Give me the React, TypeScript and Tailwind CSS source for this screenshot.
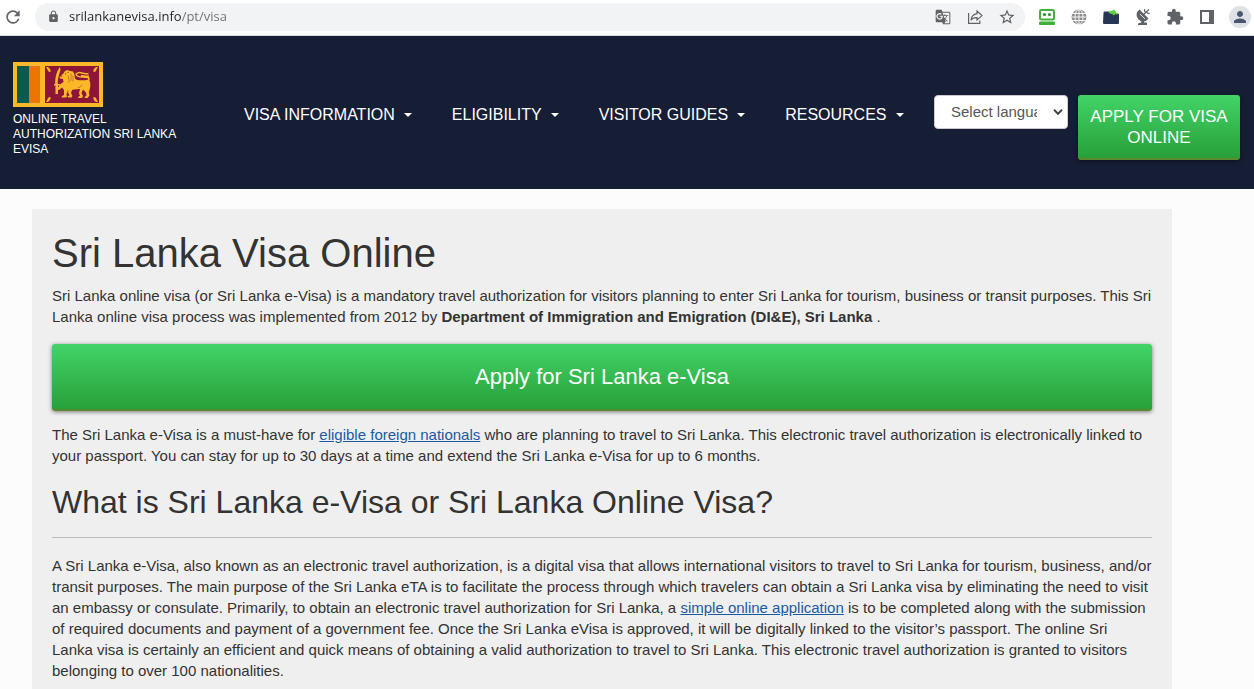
import type { ReactNode } from "react";
import { MdExtension, MdGTranslate, MdLock, MdPerson, MdRefresh, MdStarOutline } from "react-icons/md";

function ShareIcon() {
  return (
    <svg viewBox="0 0 16 16" className="size-4" fill="none" stroke="#5f6368" strokeWidth="1.2" strokeLinejoin="miter">
      <path d="M1.600 4v10.400h11.200v-3" />
      <path d="M10 2 15 6.600l-5 4.400V8.600C7.400 8.500 5.400 9 4 11.200c.4-3.600 2.600-6 6-6.500z" />
    </svg>
  );
}

function RobotIcon() {
  return (
    <svg viewBox="0 0 18 18" className="size-[18px]">
      <rect x="2" y="2" width="14" height="9.500" rx="1.500" fill="#fff" stroke="#45b03c" strokeWidth="2" />
      <circle cx="6.500" cy="6.500" r="1.600" fill="#2f8f2c" />
      <circle cx="11.500" cy="6.500" r="1.600" fill="#2f8f2c" />
      <rect x="1" y="13.500" width="16" height="3.500" rx="1" fill="#3fae3a" />
    </svg>
  );
}

function GlobeIcon() {
  return (
    <svg viewBox="0 0 16 16" className="size-4">
      <circle cx="8" cy="8" r="7.500" fill="#8f8f8f" />
      <g fill="none" stroke="#fff" strokeWidth=".9">
        <path d="M8 .5v15M.5 8h15M1 4.500h14M1 11.500h14" />
        <ellipse cx="8" cy="8" rx="4" ry="7.500" />
      </g>
    </svg>
  );
}

function WalletIcon() {
  return (
    <svg viewBox="0 0 18 18" className="size-[18px]">
      <path d="M1.500 5C1.500 4 2 3.500 3 3.500h4l1.500 2h7c1 0 1.500.5 1.500 1.500v7.500c0 1-.5 1.500-1.500 1.500h-13C1.500 16 1 15.500 1 14.500z" fill="#263653" />
      <path d="M6.500 5 8 2.500l1.500.5L12 1.500 14 4l1.500 3-2-1-2 1.500L10 5.500z" fill="#5fd13c" />
    </svg>
  );
}

function DishIcon() {
  return (
    <svg viewBox="0 0 16 18" className="h-[18px] w-4" fill="#5f6368">
      <path d="M4.500 1.500a6.500 6.500 0 1 0 9 9z" />
      <path d="M7 11h2v3.500h3V17H3v-1.500l3-1z" />
      <path d="M10 1c-1 2-.5 3 1 3s1.500 2.500 3.500 1M8 7l6-5.500" fill="none" stroke="#5f6368" strokeWidth="1.200" />
      <path d="m5 6 5 5" fill="none" stroke="#fff" strokeWidth=".8" />
    </svg>
  );
}

function PanelIcon() {
  return (
    <svg viewBox="0 0 14 14" className="size-[14px]">
      <path d="M0 0h14v14H0zM2 2v10h7V2z" fill="#5f6368" fillRule="evenodd" />
    </svg>
  );
}

function BrowserButton({ label, children }: { label: string; children: ReactNode }) {
  return (
    <button type="button" aria-label={label} className="flex size-5 items-center justify-center text-[#5f6368]">
      {children}
    </button>
  );
}

function BrowserBar() {
  return (
    <div className="flex h-9 items-center border-b border-[#dcdee1] bg-white px-[3px] pb-[2px]">
      <BrowserButton label="Reload">
        <MdRefresh className="size-5 shrink-0" />
      </BrowserButton>
      <div className="ml-3 flex h-7 flex-1 items-center rounded-full bg-[#f1f3f4] pl-3 pr-2">
        <MdLock className="size-[13px] text-[#5f6368]" />
        <input
          type="text"
          aria-label="Address"
          defaultValue="srilankanevisa.info/pt/visa"
          className="ml-[9px] min-w-0 flex-1 bg-linear-to-r from-[#202124] from-[113px] to-[#6b6f74] to-[113px] bg-clip-text pt-px font-['Open_Sans','Noto_Sans',sans-serif] text-[13px] text-transparent outline-none"
        />
        <div className="flex gap-3">
          <BrowserButton label="Translate this page">
            <MdGTranslate className="size-4" />
          </BrowserButton>
          <BrowserButton label="Share this page">
            <ShareIcon />
          </BrowserButton>
          <BrowserButton label="Bookmark this page">
            <MdStarOutline className="size-[18px]" />
          </BrowserButton>
        </div>
      </div>
      <div className="ml-3 flex items-center gap-3">
        <BrowserButton label="Form filler"><RobotIcon /></BrowserButton>
        <BrowserButton label="Globe"><GlobeIcon /></BrowserButton>
        <BrowserButton label="Wallet"><WalletIcon /></BrowserButton>
        <BrowserButton label="Satellite"><DishIcon /></BrowserButton>
        <BrowserButton label="Extensions"><MdExtension className="size-[18px]" /></BrowserButton>
        <BrowserButton label="Side panel"><PanelIcon /></BrowserButton>
        <button type="button" aria-label="Profile" className="flex size-[22px] items-center justify-center rounded-full bg-[#dee1e6] text-[#4a5670]">
          <MdPerson className="size-[18px]" />
        </button>
      </div>
    </div>
  );
}

function SriLankaFlag() {
  return (
    <svg viewBox="0 0 90 45" className="h-[45px] w-[90px]" role="img" aria-label="Flag of Sri Lanka">
      <path d="M0 0h90v45H0z" fill="#fdb82a" />
      <path d="M4 4h12v37H4z" fill="#0b5a4e" />
      <path d="M16 4h11v37H16z" fill="#ec7400" />
      <path d="M32 4h54v37H32z" fill="#8d1537" />
      <g fill="#fdb82a">
        <path d="M33 5c3 0 5 2 4.500 5-2 0-3-1-3-2.500zM85 5c-3 0-5 2-4.500 5 2 0 3-1 3-2.500zM33 40c3 0 5-2 4.500-5-2 0-3 1-3 2.500zM85 40c-3 0-5-2-4.500-5 2 0 3 1 3 2.500z" />
        <path d="M47 5c-3 4-5 9-4.800 17h2.600c-.3-6 1.700-10 2.700-14z" />
        <path d="M41 22h6v1.500h-2v8.500h-2.500v-8.500H41z" />
        <path d="m48 13 2-1 1.500-2.500L54 8l3 1 3 .5 1.500 3 .5 4 2 1.500c4 .5 8 .5 11.500-.5 1.500 1 2 3.500 1.800 6 0 3-1.300 5-1.500 7l.7 3-2 2.500h-3l.5-1.500 1.500-1-.5-3-3-3-1.500 3.500 1.500 3-1 2h-4l.5-1.500 1.500-.5-1-3 1-4-6 .5-2 .5-1 3 1.500 3-1 1.500h-3.500l-.5-1.500 2-.5-2-4-1 2.500.5 3-1.500.5h-4l.5-1.500 2-1v-5l-2-2.500-3 2.500-3-.5-.5-2 3-.5 2-3 3-2-.5-3-3-.5-.5-2h2.500l.5-1H48z" />
      </g>
      <path d="M75 19c3-4-1-4-5-4-5 0-7-1-7-3 2-1.800 4-1.800 6-1 2 .7 4 1 6.500.5M68 13.500c3 1 5 1 8 .5" fill="none" stroke="#fdb82a" strokeWidth="1.400" />
      <path d="M54 10.500h2m-1 3 1 5m2-7v7m2-5v6m-5 1 2-2m-3 10 2 1m9-4c2 0 3-1 4-3" fill="none" stroke="#9a4a23" strokeWidth=".6" />
      <circle cx="52.500" cy="11.800" r=".6" fill="#8d1537" />
    </svg>
  );
}

const menus = ["VISA INFORMATION", "ELIGIBILITY", "VISITOR GUIDES", "RESOURCES"];

const greenButton =
  "block rounded-[3px] border-b-2 border-[#5c8a30] bg-linear-to-b from-[#42d468] to-[#28a038] text-center text-white shadow-[0_1px_4px_rgba(0,0,0,0.5)]";

function SiteHeader() {
  return (
    <header className="flex items-start bg-[#161e35] pb-[29px] pl-[13px] pr-[14px] pt-[26px] text-white">
      <a href="#home" className="block w-[231px] text-[12px] leading-[15px]">
        <SriLankaFlag />
        <span className="mt-[5px] block w-[170px]">ONLINE TRAVEL AUTHORIZATION SRI LANKA EVISA</span>
      </a>
      <nav className="mt-[41px] flex flex-1 gap-10">
        {menus.map((name) => (
          <button key={name} type="button" className="flex items-center gap-[9px] whitespace-nowrap text-[16px] leading-6">
            {name}
            <svg viewBox="0 0 8 4" className="h-1 w-2" fill="currentColor">
              <path d="M0 0h8L4 4z" />
            </svg>
          </button>
        ))}
      </nav>
      <div className="relative mr-[10px] mt-[33px]">
        <select
          aria-label="Select language"
          className="h-[34px] w-[134px] appearance-none rounded-[4px] border border-[#ccc] bg-white pl-4 pr-[30px] text-[15px] text-[#555]"
        >
          <option>Select language</option>
        </select>
        <svg viewBox="0 0 10 6" className="pointer-events-none absolute right-[5px] top-[14px] h-[6px] w-[10px]" fill="none" stroke="#444" strokeWidth="2">
          <path d="m1 .8 4 4 4-4" />
        </svg>
      </div>
      <a href="#apply" className={`${greenButton} mt-[33px] w-[162px] pb-[10px] pt-[11px] text-[17px] leading-[21px]`}>
        APPLY FOR VISA ONLINE
      </a>
    </header>
  );
}

export default function App() {
  return (
    <div className="h-screen overflow-hidden bg-[#fcfcfc] font-['Liberation_Sans',Arial,sans-serif]">
      <BrowserBar />
      <SiteHeader />
      <main className="ml-8 mr-[82px] mt-5 bg-[#efefef] px-5 pb-5 pt-[22px] text-[15px] leading-[21px] text-[#333]">
        <h1 className="text-[40px] leading-[44px]">Sri Lanka Visa Online</h1>
        <p className="mt-[10px]">
          Sri Lanka online visa (or Sri Lanka e-Visa) is a mandatory travel authorization for visitors planning to enter Sri Lanka for tourism, business or transit purposes. This Sri Lanka online visa process was implemented from 2012 by <strong>Department of Immigration and Emigration (DI&amp;E), Sri Lanka</strong> .
        </p>
        <a href="#apply" className={`${greenButton} mt-[17px] py-5 text-[22px] leading-[25px]`}>
          Apply for Sri Lanka e-Visa
        </a>
        <p className="mt-[13px]">
          The Sri Lanka e-Visa is a must-have for <a href="#eligible" className="text-[#1a5ba3] underline">eligible foreign nationals</a> who are planning to travel to Sri Lanka. This electronic travel authorization is electronically linked to your passport. You can stay for up to 30 days at a time and extend the Sri Lanka e-Visa for up to 6 months.
        </p>
        <h2 className="mt-[17px] text-[32px] leading-[38px]">What is Sri Lanka e-Visa or Sri Lanka Online Visa?</h2>
        <hr className="mt-4 border-[#bbb]" />
        <p className="mt-[17px]">
          A Sri Lanka e-Visa, also known as an electronic travel authorization, is a digital visa that allows international visitors to travel to Sri Lanka for tourism, business, and/or transit purposes. The main purpose of the Sri Lanka eTA is to facilitate the process through which travelers can obtain a Sri Lanka visa by eliminating the need to visit an embassy or consulate. Primarily, to obtain an electronic travel authorization for Sri Lanka, a <a href="#application" className="text-[#1a5ba3] underline">simple online application</a> is to be completed along with the submission of required documents and payment of a government fee. Once the Sri Lanka eVisa is approved, it will be digitally linked to the visitor’s passport. The online Sri Lanka visa is certainly an efficient and quick means of obtaining a valid authorization to travel to Sri Lanka. This electronic travel authorization is granted to visitors belonging to over 100 nationalities.
        </p>
      </main>
    </div>
  );
}
